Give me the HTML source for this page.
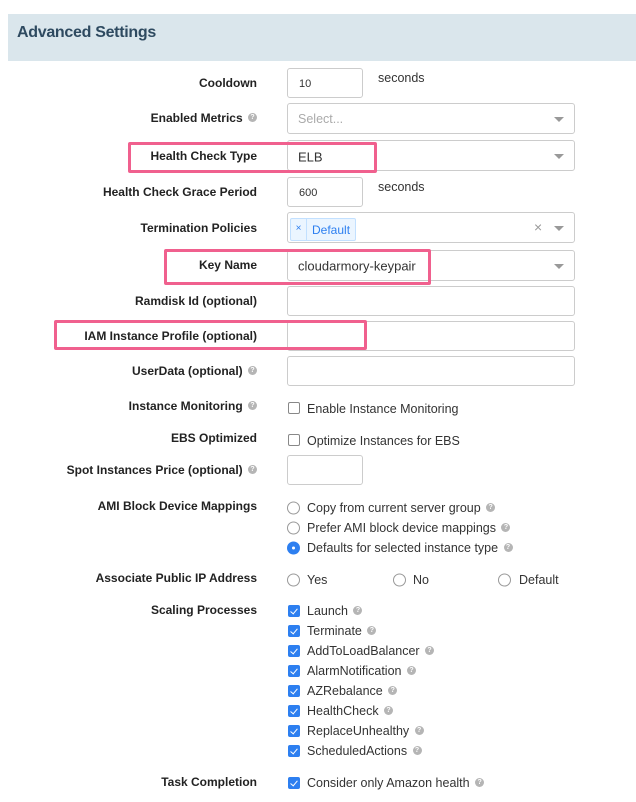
<!DOCTYPE html>
<html><head><style>
*{box-sizing:border-box;margin:0;padding:0}
body{width:636px;height:802px;background:#fff;position:relative;font-family:"Liberation Sans",sans-serif;color:#333;overflow:hidden}
.hd{position:absolute;left:8px;top:14px;width:628px;height:47px;background:#dae6ec}
.hd span{position:absolute;left:9px;top:10px;font-size:16px;font-weight:bold;color:#2e4a60;letter-spacing:-0.3px}
.l{position:absolute;right:379px;font-size:12px;font-weight:bold;color:#222;white-space:nowrap;transform:translateY(-50%)}
.in{position:absolute;border:1px solid #ccc;border-radius:3px;background:#fff}
.t{position:absolute;font-size:12.5px;color:#333;white-space:nowrap;transform:translateY(-50%)}
.q{display:inline-block;width:9px;height:9px;border-radius:50%;background:#b5b5b5;color:#fff;font-size:7px;line-height:9px;text-align:center;font-weight:bold;vertical-align:middle;position:relative;top:-1px;margin-left:2px}
.arr{position:absolute;right:10px;top:50%;margin-top:-2px;border-left:5px solid transparent;border-right:5px solid transparent;border-top:5px solid #999}
.pk{position:absolute;border:3px solid #f0608e;border-radius:2px}
.cb{position:absolute;left:288px;width:12px;height:12px;border:1px solid #888;border-radius:2px;background:#fff;transform:translateY(-50%)}
.ck{position:absolute;left:288px;width:12px;height:12px;border-radius:2px;background:#2d7ff0;transform:translateY(-50%)}
.ck:after{content:"";position:absolute;left:4px;top:1.5px;width:3px;height:6px;border:solid #fff;border-width:0 1.5px 1.5px 0;transform:rotate(40deg)}
.rd{position:absolute;width:13px;height:13px;border:1px solid #999;border-radius:50%;background:#fff;transform:translateY(-50%)}
.rs{position:absolute;width:13px;height:13px;border-radius:50%;background:#2d7ff0;transform:translateY(-50%)}
.rs:after{content:"";position:absolute;left:5px;top:5px;width:3px;height:3px;border-radius:50%;background:#fff}
</style></head><body>
<div class="hd"><span>Advanced Settings</span></div>

<div class="l" style="top:83px">Cooldown</div>
<div class="in" style="left:287px;top:68px;width:76px;height:30px"></div>
<div class="t" style="left:299px;top:84px;font-size:11px">10</div>
<div class="t" style="left:378px;top:78px">seconds</div>

<div class="l" style="top:118px">Enabled Metrics <span class="q">?</span></div>
<div class="in" style="left:287px;top:103px;width:288px;height:31px"><div class="arr"></div></div>
<div class="t" style="left:298px;top:119px;color:#aaa">Select...</div>

<div class="l" style="top:156px">Health Check Type</div>
<div class="in" style="left:287px;top:140px;width:288px;height:31px"><div class="arr"></div></div>
<div class="t" style="left:298px;top:157px;font-size:13px">ELB</div>
<div class="pk" style="left:128px;top:142px;width:249px;height:31px"></div>

<div class="l" style="top:192px">Health Check Grace Period</div>
<div class="in" style="left:287px;top:177px;width:76px;height:30px"></div>
<div class="t" style="left:299px;top:193px;font-size:11px">600</div>
<div class="t" style="left:378px;top:187px">seconds</div>

<div class="l" style="top:228px">Termination Policies</div>
<div class="in" style="left:287px;top:212px;width:288px;height:31px"><div class="arr"></div></div>
<div style="position:absolute;left:290px;top:218px;width:66px;height:23px;border:1px solid #c2e0ff;background:#ebf5ff;border-radius:2px;color:#2d7ff0;font-size:12px">
<span style="position:absolute;left:0;top:0;width:16px;height:21px;border-right:1px solid #c2e0ff;text-align:center;line-height:20px;font-size:10px">×</span>
<span style="position:absolute;left:21px;top:4px">Default</span></div>
<div class="t" style="left:534px;top:227px;color:#999;font-size:14px">×</div>

<div class="l" style="top:265px">Key Name</div>
<div class="in" style="left:287px;top:250px;width:288px;height:31px"><div class="arr"></div></div>
<div class="t" style="left:298px;top:266px;font-size:13px">cloudarmory-keypair</div>
<div class="pk" style="left:164px;top:249px;width:267px;height:36px"></div>

<div class="l" style="top:301px">Ramdisk Id (optional)</div>
<div class="in" style="left:287px;top:286px;width:288px;height:30px"></div>

<div class="l" style="top:336px">IAM Instance Profile (optional)</div>
<div class="in" style="left:287px;top:321px;width:288px;height:30px"></div>
<div class="pk" style="left:54px;top:320px;width:313px;height:30px"></div>

<div class="l" style="top:371px">UserData (optional) <span class="q">?</span></div>
<div class="in" style="left:287px;top:356px;width:288px;height:30px"></div>

<div class="l" style="top:406px">Instance Monitoring <span class="q">?</span></div>
<div class="cb" style="top:408px"></div>
<div class="t" style="left:307px;top:409px">Enable Instance Monitoring</div>

<div class="l" style="top:438px">EBS Optimized</div>
<div class="cb" style="top:440px"></div>
<div class="t" style="left:307px;top:441px">Optimize Instances for EBS</div>

<div class="l" style="top:470px">Spot Instances Price (optional) <span class="q">?</span></div>
<div class="in" style="left:287px;top:455px;width:76px;height:30px"></div>

<div class="l" style="top:506px">AMI Block Device Mappings</div>
<div class="rd" style="left:287px;top:508px"></div>
<div class="t" style="left:307px;top:508px">Copy from current server group <span class="q">?</span></div>
<div class="rd" style="left:287px;top:528px"></div>
<div class="t" style="left:307px;top:528px">Prefer AMI block device mappings <span class="q">?</span></div>
<div class="rs" style="left:287px;top:548px"></div>
<div class="t" style="left:307px;top:548px">Defaults for selected instance type <span class="q">?</span></div>

<div class="l" style="top:578px">Associate Public IP Address</div>
<div class="rd" style="left:287px;top:580px"></div>
<div class="t" style="left:307px;top:580px">Yes</div>
<div class="rd" style="left:393px;top:580px"></div>
<div class="t" style="left:413px;top:580px">No</div>
<div class="rd" style="left:498px;top:580px"></div>
<div class="t" style="left:519px;top:580px">Default</div>

<div class="l" style="top:610px">Scaling Processes</div>
<div class="ck" style="top:611px"></div><div class="t" style="left:307px;top:611px">Launch <span class="q">?</span></div>
<div class="ck" style="top:631px"></div><div class="t" style="left:307px;top:631px">Terminate <span class="q">?</span></div>
<div class="ck" style="top:651px"></div><div class="t" style="left:307px;top:651px">AddToLoadBalancer <span class="q">?</span></div>
<div class="ck" style="top:671px"></div><div class="t" style="left:307px;top:671px">AlarmNotification <span class="q">?</span></div>
<div class="ck" style="top:691px"></div><div class="t" style="left:307px;top:691px">AZRebalance <span class="q">?</span></div>
<div class="ck" style="top:711px"></div><div class="t" style="left:307px;top:711px">HealthCheck <span class="q">?</span></div>
<div class="ck" style="top:731px"></div><div class="t" style="left:307px;top:731px">ReplaceUnhealthy <span class="q">?</span></div>
<div class="ck" style="top:751px"></div><div class="t" style="left:307px;top:751px">ScheduledActions <span class="q">?</span></div>

<div class="l" style="top:782px">Task Completion</div>
<div class="ck" style="top:783px"></div><div class="t" style="left:307px;top:783px">Consider only Amazon health <span class="q">?</span></div>
</body></html>
